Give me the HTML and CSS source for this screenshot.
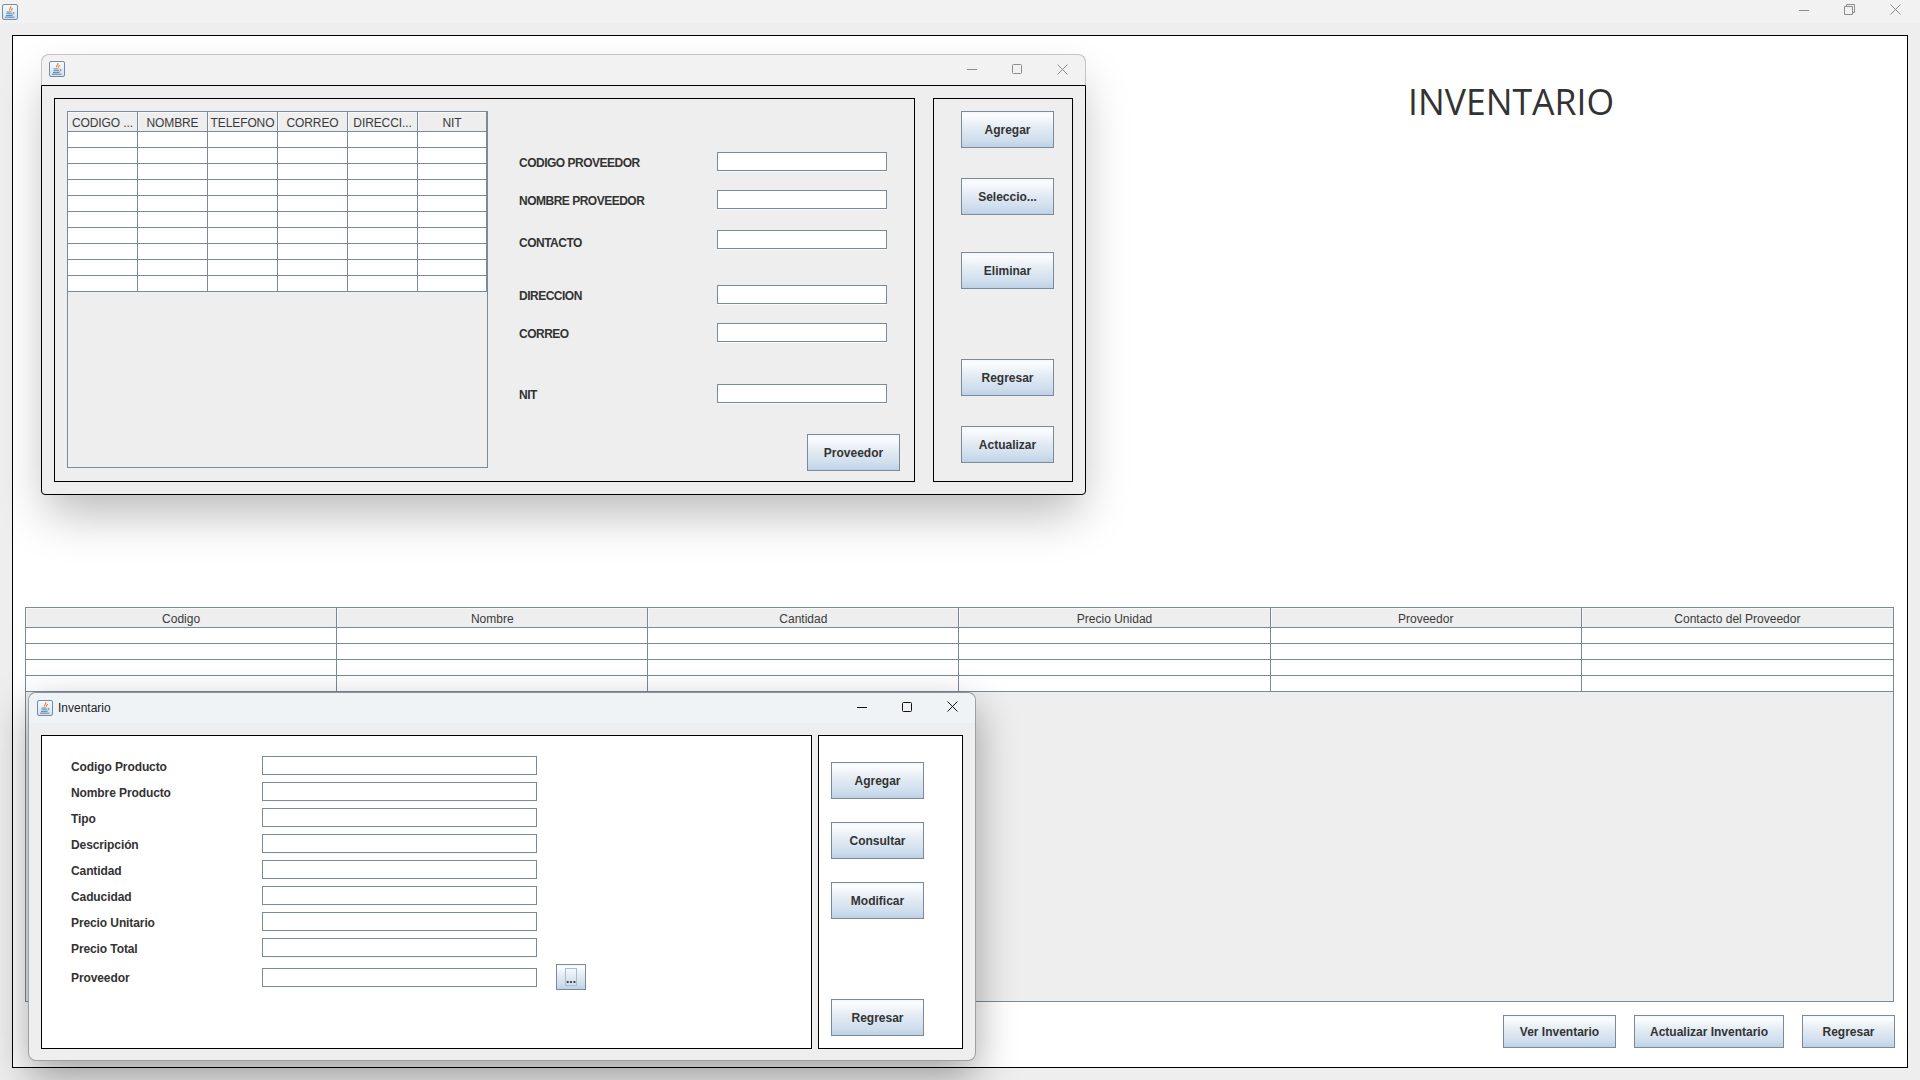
FILE: index.html
```html
<!DOCTYPE html>
<html>
<head>
  <title>Inventario</title>
  <link rel="stylesheet" href="styles.css">
</head>
<body>
  <svg class="defs" width="0" height="0">
    <symbol id="java" viewBox="0 0 16 16">
      <rect x="0.5" y="0.5" width="15" height="15" rx="1.5" fill="url(#javabg)" stroke="#6f8cab"/>
      <path d="M8.8 2 C9.6 3.6 6.8 4.6 7.8 6.6 M10.6 4 C10.4 5 9 5.2 9.6 6.6" fill="none" stroke="#ee8433" stroke-width="1.2"/>
      <path d="M4.5 8 H9.5 M4.5 9.8 H10 M10.8 8.2 C12.6 8.2 12.4 10 10.4 10.2 M4 11.6 H10.5 M3 13.2 H12.5" fill="none" stroke="#4f7aa3" stroke-width="0.9"/>
    </symbol>
    <linearGradient id="javabg" x1="0" y1="0" x2="0" y2="1">
      <stop offset="0" stop-color="#f9fbfd"/>
      <stop offset="1" stop-color="#d3e0ed"/>
    </linearGradient>
  </svg>

  <div class="topbar">
    <svg class="icon"><use href="#java"/></svg>
    <div class="controls controls-top">
      <svg width="10" height="10" viewBox="0 0 10 10"><path d="M0 5.5 H10"/></svg>
      <svg width="11" height="11" viewBox="0 0 11 11"><path d="M0.5 2.5 H8.5 V10.5 H0.5 Z M2.5 2.5 V0.5 H10.5 V8.5 H8.5"/></svg>
      <svg width="11" height="11" viewBox="0 0 11 11"><path d="M0.5 0.5 L10.5 10.5 M10.5 0.5 L0.5 10.5"/></svg>
    </div>
  </div>

  <div class="main">
    <div class="main-title">INVENTARIO</div>

    <div class="table-box main-table">
      <table>
        <thead>
          <tr><th>Codigo</th><th>Nombre</th><th>Cantidad</th><th>Precio Unidad</th><th>Proveedor</th><th>Contacto del Proveedor</th></tr>
        </thead>
        <tbody>
          <tr><td></td><td></td><td></td><td></td><td></td><td></td></tr>
          <tr><td></td><td></td><td></td><td></td><td></td><td></td></tr>
          <tr><td></td><td></td><td></td><td></td><td></td><td></td></tr>
          <tr><td></td><td></td><td></td><td></td><td></td><td></td></tr>
        </tbody>
      </table>
    </div>

    <div class="main-buttons">
      <button class="btn btn-ver">Ver Inventario</button>
      <button class="btn btn-act">Actualizar Inventario</button>
      <button class="btn">Regresar</button>
    </div>
  </div>

  <!-- ventana proveedores -->
  <div class="win win-prov">
    <div class="win-title">
      <svg class="icon"><use href="#java"/></svg>
      <div class="controls controls-prov">
        <svg width="10" height="10" viewBox="0 0 10 10"><path d="M0 5.5 H10"/></svg>
        <svg width="10" height="10" viewBox="0 0 10 10"><rect x="0.5" y="0.5" width="9" height="9" rx="1"/></svg>
        <svg width="11" height="11" viewBox="0 0 11 11"><path d="M0.5 0.5 L10.5 10.5 M10.5 0.5 L0.5 10.5"/></svg>
      </div>
    </div>
    <div class="prov-body">
      <div class="prov-left">
        <div class="table-box prov-table">
          <table>
            <thead>
              <tr><th>CODIGO ...</th><th>NOMBRE</th><th>TELEFONO</th><th>CORREO</th><th>DIRECCI...</th><th>NIT</th></tr>
            </thead>
            <tbody>
              <tr><td></td><td></td><td></td><td></td><td></td><td></td></tr>
              <tr><td></td><td></td><td></td><td></td><td></td><td></td></tr>
              <tr><td></td><td></td><td></td><td></td><td></td><td></td></tr>
              <tr><td></td><td></td><td></td><td></td><td></td><td></td></tr>
              <tr><td></td><td></td><td></td><td></td><td></td><td></td></tr>
              <tr><td></td><td></td><td></td><td></td><td></td><td></td></tr>
              <tr><td></td><td></td><td></td><td></td><td></td><td></td></tr>
              <tr><td></td><td></td><td></td><td></td><td></td><td></td></tr>
              <tr><td></td><td></td><td></td><td></td><td></td><td></td></tr>
              <tr><td></td><td></td><td></td><td></td><td></td><td></td></tr>
            </tbody>
          </table>
        </div>
        <div class="prov-form">
          <div class="row"><label>CODIGO PROVEEDOR</label><input type="text"></div>
          <div class="row"><label>NOMBRE PROVEEDOR</label><input type="text"></div>
          <div class="row row-contacto"><label>CONTACTO</label><input type="text"></div>
          <div class="row row-direccion"><label>DIRECCION</label><input type="text"></div>
          <div class="row"><label>CORREO</label><input type="text"></div>
          <div class="row row-nit"><label>NIT</label><input type="text"></div>
          <button class="btn btn-prov">Proveedor</button>
        </div>
      </div>
      <div class="prov-right">
        <button class="btn">Agregar</button>
        <button class="btn">Seleccio...</button>
        <button class="btn">Eliminar</button>
        <button class="btn">Regresar</button>
        <button class="btn">Actualizar</button>
      </div>
    </div>
  </div>

  <!-- ventana inventario -->
  <div class="win win-inv">
    <div class="win-title win-title-inv">
      <svg class="icon"><use href="#java"/></svg>
      <span class="win-name">Inventario</span>
      <div class="controls controls-inv">
        <svg width="10" height="10" viewBox="0 0 10 10"><path d="M0 5.5 H10"/></svg>
        <svg width="10" height="10" viewBox="0 0 10 10"><rect x="0.5" y="0.5" width="9" height="9" rx="1"/></svg>
        <svg width="11" height="11" viewBox="0 0 11 11"><path d="M0.5 0.5 L10.5 10.5 M10.5 0.5 L0.5 10.5"/></svg>
      </div>
    </div>
    <div class="inv-body">
      <div class="inv-left">
        <div class="row"><label>Codigo Producto</label><input type="text"></div>
        <div class="row"><label>Nombre Producto</label><input type="text"></div>
        <div class="row"><label>Tipo</label><input type="text"></div>
        <div class="row"><label>Descripción</label><input type="text"></div>
        <div class="row"><label>Cantidad</label><input type="text"></div>
        <div class="row"><label>Caducidad</label><input type="text"></div>
        <div class="row"><label>Precio Unitario</label><input type="text"></div>
        <div class="row"><label>Precio Total</label><input type="text"></div>
        <div class="row"><label>Proveedor</label><input type="text"><button class="btn btn-dots"><span>...</span></button></div>
      </div>
      <div class="inv-right">
        <button class="btn">Agregar</button>
        <button class="btn">Consultar</button>
        <button class="btn">Modificar</button>
        <button class="btn">Regresar</button>
      </div>
    </div>
  </div>
</body>
</html>
```

FILE: styles.css
```css
body {
  margin: 0;
  background-color: #eeeeee;
  font-family: "Liberation Sans", Arial, sans-serif;
  font-size: 12px;
  color: #333;
  height: 1080px;
  overflow: hidden;
  position: relative;
}
.defs {
  position: absolute;
}
.icon {
  width: 16px;
  height: 16px;
  flex: none;
}

/* barra superior */
.topbar {
  height: 23px;
  background-color: #f2f2f2;
  display: flex;
  align-items: center;
  padding-left: 2px;
}
.controls {
  margin-left: auto;
  display: flex;
  align-items: center;
}
.controls svg {
  fill: none;
  stroke: #8c8c8c;
  stroke-width: 1;
  flex: none;
}
.controls-top {
  gap: 35px;
  padding-right: 19px;
  margin-top: -4px;
}
.controls-prov {
  gap: 35px;
  padding-right: 17px;
}
.controls-inv {
  gap: 35px;
  padding-right: 17px;
  margin-top: -2px;
}
.controls-inv svg {
  stroke: #111;
}

/* panel principal */
.main {
  margin: 12px 12px 0;
  height: 1031px;
  border: 1px solid #000;
  background-color: #fff;
  padding: 0 12px;
}
.main-title {
  height: 526px;
  padding-top: 45px;
  padding-left: 1383px;
  line-height: 40px;
  font-family: "Open Sans", sans-serif;
  font-size: 35.6px;
  color: #333;
}
.main-buttons {
  display: flex;
  justify-content: flex-end;
  gap: 18px;
  margin-top: 13px;
}
.main-buttons .btn {
  height: 33px;
}
.main-buttons .btn-ver {
  width: 113px;
}
.main-buttons .btn-act {
  width: 150px;
}

/* tablas */
.table-box {
  border: 1px solid #7a8a99;
  background-color: #eeeeee;
  box-sizing: border-box;
}
table {
  width: 100%;
  border-collapse: separate;
  border-spacing: 0;
  table-layout: fixed;
}
th {
  height: 17px;
  padding: 2px 0 0;
  font-weight: normal;
  font-size: 12px;
  color: #3a3a3a;
  background-color: #eeeeee;
  border-right: 1px solid #7a8a99;
  border-bottom: 1px solid #7a8a99;
  box-shadow: inset 1px 1px 0 #f8f8f8;
  overflow: hidden;
  white-space: nowrap;
}
td {
  height: 15px;
  padding: 0;
  background-color: #fff;
  border-right: 1px solid #7a8a99;
  border-bottom: 1px solid #7a8a99;
}
.main-table {
  width: 1869px;
  height: 395px;
}
.main-table th:last-child,
.main-table td:last-child {
  border-right: 0;
}
.prov-table {
  width: 421px;
  height: 357px;
  flex: none;
}
.prov-table th {
  width: 69px;
  letter-spacing: -0.1px;
}
.prov-table th:last-child {
  width: auto;
}

/* botones */
.btn {
  width: 93px;
  height: 37px;
  padding: 0;
  box-sizing: border-box;
  border: 1px solid #7a8a99;
  background: linear-gradient(#f4f7fa 0, #fbfcfe 10%, #e3ebf3 45%, #cfdeed 80%, #bdd1e6 100%);
  font-family: "Liberation Sans", Arial, sans-serif;
  font-size: 12px;
  font-weight: bold;
  color: #333;
  flex: none;
}

/* campos */
input[type="text"] {
  width: 170px;
  height: 19px;
  box-sizing: border-box;
  border: 1px solid #7a8a99;
  background-color: #fff;
  box-shadow: 0 1px 0 #fbfbfb;
  padding: 0;
  margin: 0;
  flex: none;
}
.row {
  display: flex;
  align-items: center;
}
label {
  font-weight: bold;
  color: #333;
  flex: none;
  padding-top: 2px;
}

/* ventanas */
.win {
  position: absolute;
  box-sizing: border-box;
  background-color: #eeeeee;
  border-radius: 8px;
}
.win-title {
  height: 31px;
  display: flex;
  align-items: center;
  background-color: #f2f2f2;
  border-radius: 8px 8px 0 0;
  padding-left: 7px;
  box-sizing: border-box;
}
.win-prov {
  left: 41px;
  top: 54px;
  width: 1045px;
  height: 441px;
  box-shadow: 0 24px 48px -6px rgba(0, 0, 0, 0.28);
}
.win-prov .win-title {
  border: 1px solid #c4c4c4;
  border-bottom: 0;
  padding-bottom: 2px;
}
.prov-body {
  height: 410px;
  box-sizing: border-box;
  border: 1px solid #000;
  border-radius: 0 0 4px 4px;
  padding: 12px;
  display: flex;
  gap: 18px;
}
.prov-left {
  width: 861px;
  box-sizing: border-box;
  border: 1px solid #000;
  padding: 12px;
  display: flex;
  flex: none;
  align-items: flex-start;
}
.prov-form {
  margin-left: 31px;
  padding-top: 41px;
  width: 381px;
  display: flex;
  flex-direction: column;
}
.prov-form label {
  width: 198px;
  letter-spacing: -0.5px;
}
.prov-form .row {
  height: 19px;
  margin-bottom: 19px;
}
.prov-form .row-contacto {
  margin-top: 2px;
}
.prov-form .row-contacto label {
  padding-top: 6px;
}
.prov-form .row-direccion {
  margin-top: 17px;
}
.prov-form .row-nit {
  margin-top: 23px;
  margin-bottom: 31px;
}
.btn-prov {
  align-self: flex-end;
}
.prov-right {
  width: 140px;
  box-sizing: border-box;
  border: 1px solid #000;
  padding: 12px 0 0 27px;
  display: flex;
  flex-direction: column;
}
.prov-right .btn:nth-child(2) {
  margin-top: 30px;
}
.prov-right .btn:nth-child(3) {
  margin-top: 37px;
}
.prov-right .btn:nth-child(4) {
  margin-top: 70px;
}
.prov-right .btn:nth-child(5) {
  margin-top: 30px;
}

.win-inv {
  left: 28px;
  top: 692px;
  width: 948px;
  height: 369px;
  border: 1px solid #9aa0a6;
  border-top-color: #8a939c;
  box-shadow: 0 16px 40px rgba(0, 0, 0, 0.36);
}
.win-title-inv {
  background-color: #f0f3f6;
  height: 30px;
  padding-left: 8px;
  padding-bottom: 1px;
}
.win-name {
  margin-left: 5px;
  color: #222;
}
.inv-body {
  padding: 12px;
  display: flex;
  gap: 6px;
}
.inv-left {
  width: 771px;
  height: 314px;
  box-sizing: border-box;
  border: 1px solid #000;
  background-color: #fff;
  padding: 20px 0 0 29px;
  display: flex;
  flex-direction: column;
  gap: 7px;
  flex: none;
}
.inv-left label {
  width: 191px;
  letter-spacing: -0.1px;
}
.inv-left input[type="text"] {
  width: 275px;
}
.btn-dots {
  width: 30px;
  height: 26px;
  margin-left: 19px;
  display: flex;
  align-items: stretch;
  justify-content: center;
  padding: 3px 0;
}
.btn-dots span {
  width: 10px;
  border: 1px solid #a8bdd4;
  display: flex;
  align-items: flex-end;
  justify-content: center;
  line-height: 11px;
}
.inv-right {
  width: 146px;
  height: 314px;
  box-sizing: border-box;
  border: 1px solid #000;
  background-color: #fff;
  padding: 26px 0 0 12px;
  display: flex;
  flex-direction: column;
}
.inv-right .btn:nth-child(2),
.inv-right .btn:nth-child(3) {
  margin-top: 23px;
}
.inv-right .btn:nth-child(4) {
  margin-top: 80px;
}
```
